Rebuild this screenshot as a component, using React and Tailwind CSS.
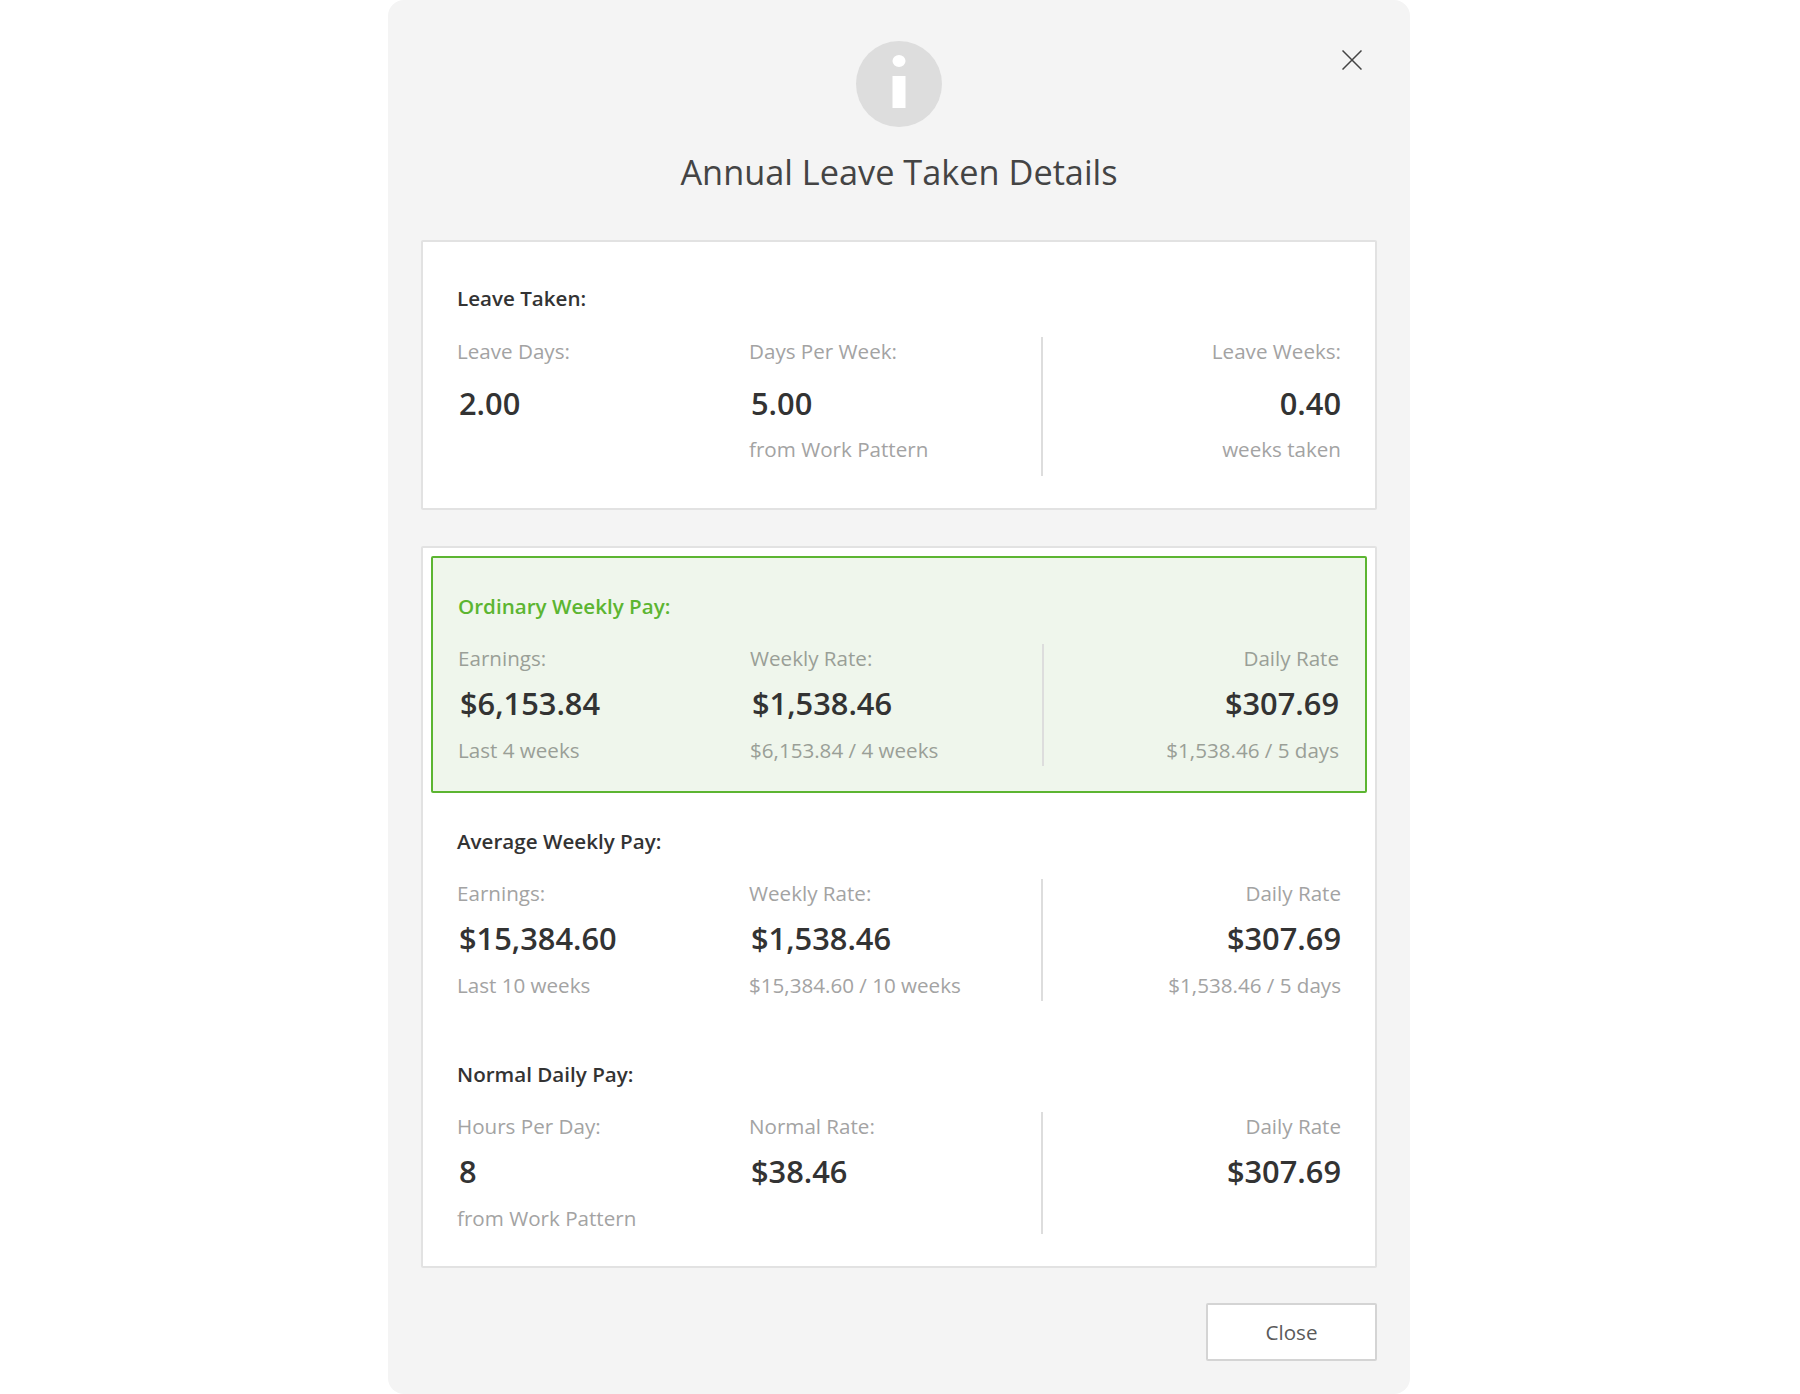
const font = { fontFamily: '"Open Sans", sans-serif' };

function Cell({ label, value, sub, right, green, roomy }) {
  const muted = green ? "text-[#9a9f97]" : "text-[#a3a3a3]";
  return (
    <div className={right ? "flex flex-col items-end text-right" : "flex flex-col items-start"}>
      <div className={`h-[28px] text-[20.6px] leading-[28px] ${muted}`}>{label}</div>
      <div className={`${roomy ? "mt-[18px]" : "mt-[11px]"} h-[40px] text-[30.8px] leading-[40px] font-semibold text-[#333333] ${right ? "" : "pl-[2px]"}`}>{value}</div>
      {sub ? <div className={`${roomy ? "mt-[12px]" : "mt-[13px]"} h-[28px] text-[20.6px] leading-[28px] ${muted}`}>{sub}</div> : null}
    </div>
  );
}

function Section({ title, cells, green, roomy, className }) {
  return (
    <div className={className}>
      <div className={`h-[28px] text-[20.6px] leading-[28px] font-semibold ${green ? "text-[#5cb531]" : "text-[#333333]"}`}>{title}</div>
      <div className={`${roomy ? "mt-[25px]" : "mt-[24px]"} grid grid-cols-[292px_292px_1fr]`}>
        <Cell {...cells[0]} green={green} roomy={roomy} />
        <Cell {...cells[1]} green={green} roomy={roomy} />
        <div className={`border-l-2 border-[#dddddd] ${roomy ? "min-h-[139px]" : "min-h-[122px]"}`}>
          <Cell {...cells[2]} right green={green} roomy={roomy} />
        </div>
      </div>
    </div>
  );
}

export default function App() {
  return (
    <div className="min-h-[1394px] bg-white flex justify-center pr-[2px]" style={font}>
      <div className="relative w-[1022px] h-[1394px] bg-[#f4f4f4] rounded-[16px] px-[33px] flex flex-col">
        <button className="absolute right-[48px] top-[50px] text-[#444444]">
          <svg width="20" height="20" viewBox="0 0 20 20" fill="none" stroke="currentColor" strokeWidth="1.5">
            <path d="M0.5 0.5L19.5 19.5M19.5 0.5L0.5 19.5" />
          </svg>
        </button>
        <div className="flex flex-col items-center pt-[41px]">
          <svg width="86" height="86" viewBox="0 0 86 86">
            <circle cx="43" cy="43" r="43" fill="#dddddd" />
            <ellipse cx="43" cy="20" rx="6.5" ry="6" fill="#ffffff" />
            <rect x="36.5" y="35" width="13" height="32" fill="#ffffff" />
          </svg>
          <h1 className="mt-[20px] text-[34.3px] leading-[50px] font-normal text-[#444444]">Annual Leave Taken Details</h1>
        </div>
        <div className="mt-[43px] h-[270px] bg-white border-2 border-[#e2e2e2] rounded-[2px] px-[34px] pt-[42px]">
          <Section
            roomy
            title="Leave Taken:"
            cells={[
              { label: "Leave Days:", value: "2.00" },
              { label: "Days Per Week:", value: "5.00", sub: "from Work Pattern" },
              { label: "Leave Weeks:", value: "0.40", sub: "weeks taken" },
            ]}
          />
        </div>
        <div className="mt-[36px] h-[722px] bg-white border-2 border-[#e2e2e2] rounded-[2px] p-[8px]">
          <Section
            green
            title="Ordinary Weekly Pay:"
            className="h-[237px] bg-[#eff6ec] border-2 border-[#5cb531] rounded-[2px] pl-[25px] pr-[26px] pt-[34px]"
            cells={[
              { label: "Earnings:", value: "$6,153.84", sub: "Last 4 weeks" },
              { label: "Weekly Rate:", value: "$1,538.46", sub: "$6,153.84 / 4 weeks" },
              { label: "Daily Rate", value: "$307.69", sub: "$1,538.46 / 5 days" },
            ]}
          />
          <Section
            title="Average Weekly Pay:"
            className="mt-[34px] px-[26px]"
            cells={[
              { label: "Earnings:", value: "$15,384.60", sub: "Last 10 weeks" },
              { label: "Weekly Rate:", value: "$1,538.46", sub: "$15,384.60 / 10 weeks" },
              { label: "Daily Rate", value: "$307.69", sub: "$1,538.46 / 5 days" },
            ]}
          />
          <Section
            title="Normal Daily Pay:"
            className="mt-[59px] px-[26px]"
            cells={[
              { label: "Hours Per Day:", value: "8", sub: "from Work Pattern" },
              { label: "Normal Rate:", value: "$38.46" },
              { label: "Daily Rate", value: "$307.69" },
            ]}
          />
        </div>
        <div className="mt-[35px] flex justify-end">
          <button className="w-[171px] h-[58px] bg-white border-2 border-[#d4d4d4] rounded-[2px] text-[20.6px] text-[#5a5a5a]">Close</button>
        </div>
      </div>
    </div>
  );
}
